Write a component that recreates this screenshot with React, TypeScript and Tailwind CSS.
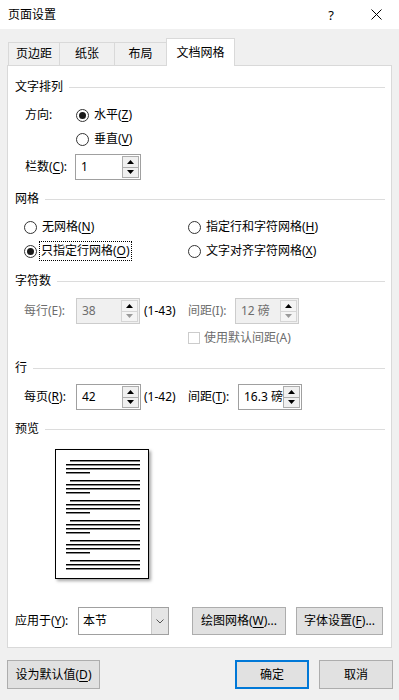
import React from "react";

const FONT = "font-['Noto_Sans','Noto_Sans_CJK_SC',sans-serif]";

function Heading({ title }: { title: string }) {
  return (
    <div className="flex items-center h-[16px]">
      <span>{title}</span>
      <div className="flex-1 h-px bg-[#dcdcdc] ml-[6px]" />
    </div>
  );
}

function Radio({ checked, children }: { checked?: boolean; children: React.ReactNode }) {
  return (
    <div className="flex items-center gap-[5px] h-[20px]">
      <div className="w-[13px] h-[13px] rounded-full border border-[#333] bg-white flex items-center justify-center shrink-0">
        {checked && <div className="w-[7px] h-[7px] rounded-full bg-[#1a1a1a]" />}
      </div>
      {children}
    </div>
  );
}

function Arrow({ up, color }: { up?: boolean; color: string }) {
  return (
    <svg width="7" height="4" viewBox="0 0 7 4">
      <path d={up ? "M0 4 L3.5 0 L7 4 Z" : "M0 0 L3.5 4 L7 0 Z"} fill={color} />
    </svg>
  );
}

function Spin({ value, width, disabled }: { value: string; width: string; disabled?: boolean }) {
  return (
    <div
      className={
        "flex h-[26px] border " +
        width +
        (disabled ? " border-[#cccccc] bg-[#f0f0f0] text-[#6d6d6d]" : " border-[#a0a0a0] bg-white text-black")
      }
    >
      <div className="flex-1 flex items-center pl-[5px] whitespace-nowrap">{value}</div>
      <div className="flex flex-col w-[17px] mr-px my-px">
        <div className={"flex-1 flex items-center justify-center border " + (disabled ? "border-[#d5d5d5] bg-[#f4f4f4]" : "border-[#adadad] bg-[#f0f0f0]")}>
          <Arrow up color="#000" />
        </div>
        <div className={"flex-1 flex items-center justify-center border border-t-0 " + (disabled ? "border-[#d5d5d5] bg-[#f4f4f4]" : "border-[#adadad] bg-[#f0f0f0]")}>
          <Arrow color={disabled ? "#9a9a9a" : "#000"} />
        </div>
      </div>
    </div>
  );
}

function Btn({ children, width, primary }: { children: React.ReactNode; width: string; primary?: boolean }) {
  return (
    <div
      className={
        "flex items-center justify-center bg-[#e1e1e1] whitespace-nowrap " +
        width +
        (primary ? " border-2 border-[#0078d7]" : " border border-[#adadad]")
      }
    >
      {children}
    </div>
  );
}

const U = ({ c }: { c: string }) => <span className="underline underline-offset-2">{c}</span>;

function PreviewPage() {
  const groups = [4, 4, 4, 4, 4, 3];
  return (
    <div className="w-[94px] h-[130px] border border-black bg-white shadow-[2px_2px_3px_rgba(0,0,0,0.35)] pt-[10px] pl-[10px] flex flex-col gap-[6px]">
      {groups.map((n, gi) => (
        <div key={gi} className="flex flex-col gap-[2px]">
          {Array.from({ length: n }).map((_, li) => (
            <div
              key={li}
              className={
                "h-[2px] bg-black border-b border-[#8a8a8a] " +
                (li === 0 ? "ml-[4px] w-[70px]" : li === 3 ? "w-[24px]" : "w-[74px]")
              }
            />
          ))}
        </div>
      ))}
    </div>
  );
}

export default function App() {
  return (
    <div className={"w-[399px] h-[700px] bg-[#f0f0f0] text-[12px] leading-[16px] text-black overflow-hidden " + FONT}>
      {/* Title bar */}
      <div className="h-[29px] bg-white flex items-center">
        <span className="pl-[8px]">页面设置</span>
        <div className="ml-auto w-[46px] flex justify-center text-[13px]">?</div>
        <div className="w-[45px] flex justify-center">
          <svg width="11" height="11" viewBox="0 0 11 11">
            <path d="M0.5 0.5 L10.5 10.5 M10.5 0.5 L0.5 10.5" stroke="#000" strokeWidth="1" />
          </svg>
        </div>
      </div>

      {/* Tabs */}
      <div className="flex items-end ml-[8px] mt-[9px] h-[27px]">
        <div className="w-[51px] h-[23px] border-t border-l border-[#d9d9d9] flex items-center justify-center">页边距</div>
        <div className="w-[55px] h-[23px] border-t border-l border-[#d9d9d9] flex items-center justify-center">纸张</div>
        <div className="w-[52px] h-[23px] border-t border-l border-[#d9d9d9] flex items-center justify-center">布局</div>
        <div className="relative z-10 -mb-px w-[69px] h-[28px] bg-white border-t border-l border-r border-[#d9d9d9] flex items-center justify-center">
          文档网格
        </div>
      </div>

      {/* Panel */}
      <div className="ml-[7px] w-[385px] bg-white border border-[#d9d9d9] pl-[7px] pr-[6px] pt-[13px] pb-[12px] flex flex-col">
        <Heading title="文字排列" />
        <div className="mt-[10px] flex items-center h-[20px]">
          <span className="ml-[10px] w-[51px]">方向:</span>
          <Radio checked>
            <span>
              水平(<U c="Z" />)
            </span>
          </Radio>
        </div>
        <div className="mt-[4px] flex items-center h-[20px] pl-[61px]">
          <Radio>
            <span>
              垂直(<U c="V" />)
            </span>
          </Radio>
        </div>
        <div className="mt-[5px] flex items-center h-[26px]">
          <span className="ml-[10px] w-[50px]">
            栏数(<U c="C" />):
          </span>
          <Spin value="1" width="w-[66px]" />
        </div>

        <div className="mt-[11px]">
          <Heading title="网格" />
        </div>
        <div className="mt-[10px] flex items-center h-[20px] pl-[9px]">
          <div className="w-[164px]">
            <Radio>
              <span>
                无网格(<U c="N" />)
              </span>
            </Radio>
          </div>
          <Radio>
            <span>
              指定行和字符网格(<U c="H" />)
            </span>
          </Radio>
        </div>
        <div className="mt-[4px] flex items-center h-[20px] pl-[9px]">
          <div className="w-[164px] flex items-center gap-[2px] h-[20px]">
            <div className="w-[13px] h-[13px] rounded-full border border-[#333] bg-white flex items-center justify-center shrink-0">
              <div className="w-[7px] h-[7px] rounded-full bg-[#1a1a1a]" />
            </div>
            <span className="border border-dotted border-black px-px h-[20px] flex items-center">
              只指定行网格(<U c="O" />)
            </span>
          </div>
          <Radio>
            <span>
              文字对齐字符网格(<U c="X" />)
            </span>
          </Radio>
        </div>

        <div className="mt-[12px]">
          <Heading title="字符数" />
        </div>
        <div className="mt-[9px] flex items-center h-[26px] pl-[9px]">
          <span className="w-[52px] text-[#6d6d6d]">每行(E):</span>
          <Spin value="38" width="w-[64px]" disabled />
          <span className="ml-[4px] w-[44px]">(1-43)</span>
          <span className="w-[47px] text-[#6d6d6d]">间距(I):</span>
          <Spin value="12 磅" width="w-[64px]" disabled />
        </div>
        <div className="mt-[4px] flex items-center h-[20px] pl-[173px] gap-[4px] text-[#6d6d6d]">
          <div className="w-[12px] h-[12px] border border-[#cccccc] bg-white" />
          <span>使用默认间距(A)</span>
        </div>

        <div className="mt-[12px]">
          <Heading title="行" />
        </div>
        <div className="mt-[8px] flex items-center h-[26px] pl-[9px]">
          <span className="w-[52px]">
            每页(<U c="R" />):
          </span>
          <Spin value="42" width="w-[65px]" />
          <span className="ml-[3px] w-[44px]">(1-42)</span>
          <span className="w-[50px]">
            间距(<U c="T" />):
          </span>
          <Spin value="16.3 磅" width="w-[64px]" />
        </div>

        <div className="mt-[11px]">
          <Heading title="预览" />
        </div>
        <div className="mt-[12px] pl-[40px]">
          <PreviewPage />
        </div>

        <div className="mt-[28px] flex items-center h-[28px]">
          <span className="w-[63px] whitespace-nowrap">
            应用于(<U c="Y" />):
          </span>
          <div className="w-[91px] h-[28px] flex border border-[#a0a0a0] bg-white">
            <div className="flex-1 flex items-center pl-[4px]">本节</div>
            <div className="w-[17px] bg-[#e5e5e5] border-l border-[#c8c8c8] flex items-center justify-center">
              <svg width="8" height="5" viewBox="0 0 8 5">
                <path d="M0.5 0.5 L4 4 L7.5 0.5" stroke="#555" fill="none" strokeWidth="1" />
              </svg>
            </div>
          </div>
          <div className="ml-[23px] h-[28px] flex">
            <Btn width="w-[94px]">
              绘图网格(<U c="W" />)...
            </Btn>
          </div>
          <div className="ml-[10px] h-[28px] flex">
            <Btn width="w-[87px]">
              字体设置(<U c="F" />)...
            </Btn>
          </div>
        </div>
      </div>

      {/* Footer */}
      <div className="mt-[12px] flex h-[29px] pl-[7px] pr-[6px]">
        <Btn width="w-[93px]">
          设为默认值(<U c="D" />)
        </Btn>
        <div className="ml-auto flex gap-[10px]">
          <Btn width="w-[74px]" primary>
            确定
          </Btn>
          <Btn width="w-[74px]">取消</Btn>
        </div>
      </div>
    </div>
  );
}
